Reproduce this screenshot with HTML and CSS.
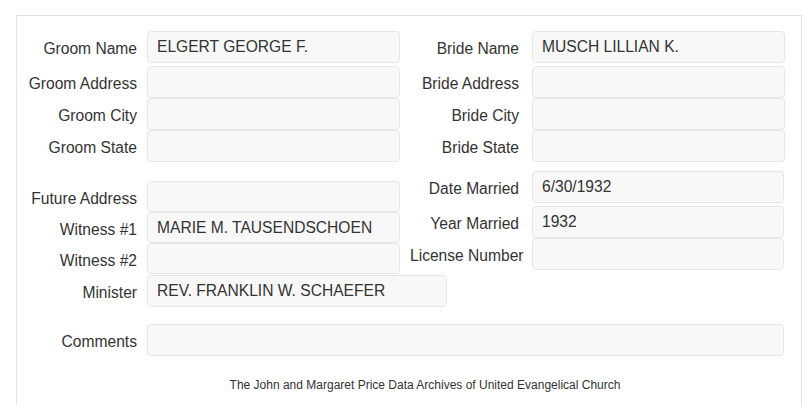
FILE: index.html
```html
<!DOCTYPE html>
<html lang="en">
<head>
    <meta charset="UTF-8">
    <meta name="viewport" content="width=device-width, initial-scale=1.0">
    <title>Marriage Record</title>
    <link rel="stylesheet" href="styles.css">
</head>
<body>
    <div class="record">
        <div class="top-grid">
            <label class="field-label">Groom Name</label>
            <input class="field" type="text" value="ELGERT GEORGE F." readonly>
            <label class="field-label right">Bride Name</label>
            <input class="field" type="text" value="MUSCH LILLIAN K." readonly>

            <label class="field-label">Groom Address</label>
            <input class="field" type="text" value="" readonly>
            <label class="field-label right">Bride Address</label>
            <input class="field" type="text" value="" readonly>

            <label class="field-label">Groom City</label>
            <input class="field" type="text" value="" readonly>
            <label class="field-label right">Bride City</label>
            <input class="field" type="text" value="" readonly>

            <label class="field-label">Groom State</label>
            <input class="field" type="text" value="" readonly>
            <label class="field-label right">Bride State</label>
            <input class="field" type="text" value="" readonly>
        </div>

        <div class="lower">
            <div class="stack left-stack">
                <div class="row">
                    <label class="field-label">Future Address</label>
                    <input class="field" type="text" value="" readonly>
                </div>
                <div class="row">
                    <label class="field-label">Witness #1</label>
                    <input class="field" type="text" value="MARIE M. TAUSENDSCHOEN" readonly>
                </div>
                <div class="row">
                    <label class="field-label">Witness #2</label>
                    <input class="field" type="text" value="" readonly>
                </div>
            </div>
            <div class="stack right-stack">
                <div class="row first-row">
                    <label class="field-label right">Date Married</label>
                    <input class="field" type="text" value="6/30/1932" readonly>
                </div>
                <div class="row">
                    <label class="field-label right">Year Married</label>
                    <input class="field" type="text" value="1932" readonly>
                </div>
                <div class="row">
                    <label class="field-label right">License Number</label>
                    <input class="field" type="text" value="" readonly>
                </div>
            </div>
        </div>

        <div class="row minister-row">
            <label class="field-label">Minister</label>
            <input class="field minister" type="text" value="REV. FRANKLIN W. SCHAEFER" readonly>
        </div>

        <div class="row comments-row">
            <label class="field-label">Comments</label>
            <input class="field comments" type="text" value="" readonly>
        </div>

        <p class="footer">The John and Margaret Price Data Archives of United Evangelical Church</p>
    </div>
</body>
</html>
```

FILE: styles.css
```css
body {
    margin: 0;
    padding: 0;
    background-color: #fff;
    font-family: "Liberation Sans", Arial, sans-serif;
    font-size: 15.6px;
    color: #333;
}

.record {
    box-sizing: border-box;
    width: 786px;
    height: 390px;
    margin: 15px 0 0 16px;
    border: 1px solid #e3e3e3;
    border-bottom: none;
}

.top-grid {
    display: grid;
    grid-template-columns: 130px 253px 132px 252px;
    grid-template-rows: 35px 32px 32px 32px;
    align-items: start;
    margin-top: 15px;
}

.field-label {
    display: block;
    box-sizing: border-box;
    width: 130px;
    height: 32px;
    padding: 3px 10px 0 0;
    line-height: 29px;
    text-align: right;
    white-space: nowrap;
    flex: none;
}

.field-label.right {
    width: 132px;
    padding-left: 10px;
    padding-right: 13px;
}

.field {
    box-sizing: border-box;
    width: 253px;
    height: 32px;
    margin: 0;
    padding: 0 9px;
    font-family: inherit;
    font-size: 15.6px;
    color: #333;
    background-color: #f8f8f8;
    border: 1px solid #e6e6e6;
    border-radius: 4px;
    outline: none;
    flex: none;
}

.lower {
    display: flex;
    margin-top: 9px;
}

.stack {
    display: flex;
    flex-direction: column;
}

.row {
    display: flex;
    align-items: center;
}

.left-stack {
    width: 383px;
    padding-top: 10px;
}

.left-stack .row,
.left-stack .field,
.left-stack .field-label {
    height: 31px;
}

.right-stack .field {
    width: 252px;
}

.right-stack .first-row {
    margin-bottom: 3px;
}

.minister-row {
    margin-top: 1px;
}

.minister {
    width: 300px;
}

.comments-row {
    margin-top: 17px;
}

.comments {
    width: 637px;
}

.footer {
    margin: 22px 0 0;
    padding-left: 32px;
    font-size: 12px;
    line-height: 14px;
    text-align: center;
}
```
